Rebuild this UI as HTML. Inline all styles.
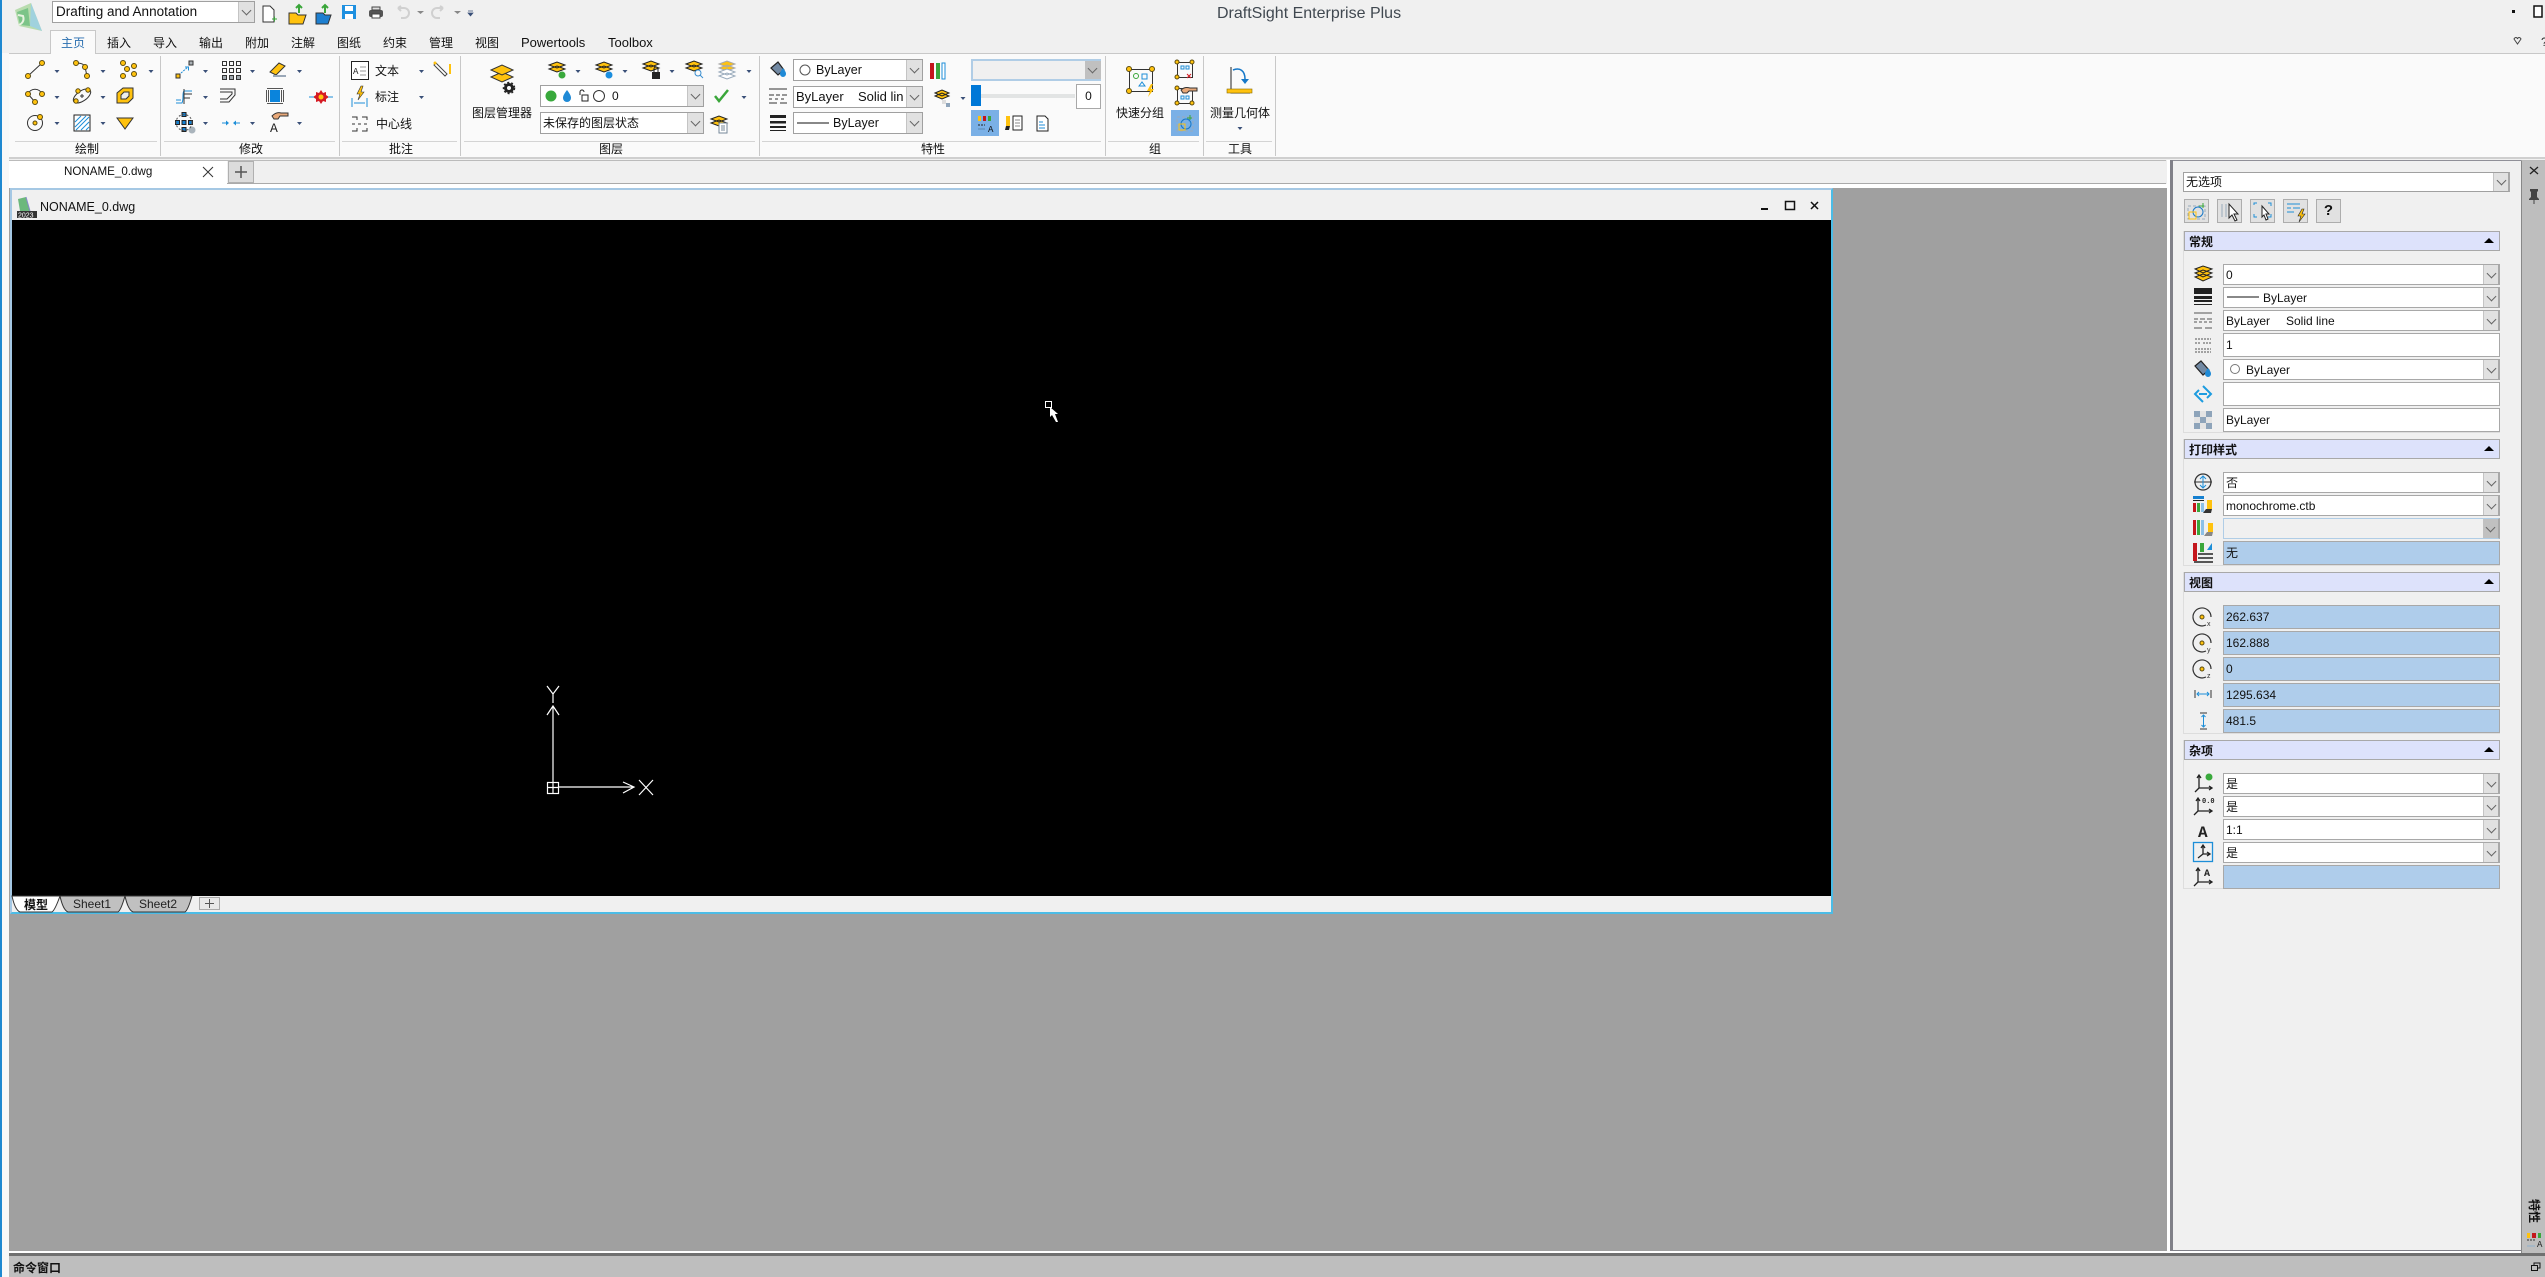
<!DOCTYPE html>
<html><head><meta charset="utf-8"><title>DraftSight</title>
<style>
html,body{margin:0;padding:0;width:2545px;height:1277px;overflow:hidden;background:#f0f0f0}
*{box-sizing:border-box}
body{font:12px/14px "Liberation Sans","Noto Sans CJK SC",sans-serif;color:#111;position:relative}
.a{position:absolute}
.t{position:absolute;white-space:nowrap;line-height:16px;height:16px}
.ctr{transform:translateX(-50%)}
.f{position:absolute;left:2223px;width:277px;height:24px;background:#fff;border:1px solid #a8a8a8;padding-left:2px;line-height:23px;font-size:12px;white-space:nowrap}
.f.h{background:#afcdeb}
.f.s{height:21px;line-height:20px;border-right:2px solid #a8a8a8}
.c{position:absolute;background:#fff;border:1px solid #a0a0a0;white-space:nowrap;overflow:hidden;line-height:20px;padding-left:2px}
.b{position:absolute;right:0;top:0;bottom:0;width:14px;background:#e1e1e1;border-left:1px solid #c4c4c4}
.b:after{content:"";position:absolute;left:4px;top:calc(50% - 5px);width:6px;height:6px;border-right:1px solid #666;border-bottom:1px solid #666;transform:rotate(45deg)}
.f .b{width:15px}
.sec{position:absolute;left:2184px;width:316px;height:20px;background:#dde2fb;border:1px solid #a8a8a8;font-weight:bold;line-height:20px;padding-left:4px;font-size:12px}
.sec:after{content:"";position:absolute;right:5px;top:6px;border:5px solid transparent;border-top:0;border-bottom:5px solid #000}
.box{position:absolute;left:2183px;width:317px;border-left:1px solid #ddd;border-bottom:1px solid #ddd;background:#f0f0f0}
.tb{position:absolute;top:199px;width:25px;height:24px;background:#e1e1e1;border:1px solid #adadad}
.sep{position:absolute;top:56px;width:1px;height:100px;background:#c8c8c8}
.ln{position:absolute;top:141px;height:1px;background:#d4d4d4}
svg{position:absolute;left:0;top:0;overflow:visible}
.d{fill:#ffc20e;stroke:#5a4a10;stroke-width:1}
.k{fill:none;stroke:#333;stroke-width:1}
.bl{fill:none;stroke:#1d8ed8;stroke-width:1}
.ar{fill:#3a5078}
.y{fill:#ffc20e;stroke:#222;stroke-width:1}
</style></head><body>

<!-- left edge -->
<div class="a" style="left:0;top:0;width:2px;height:1277px;background:#1e88d0"></div>
<div class="a" style="left:2px;top:53px;width:7px;height:1224px;background:#f8f8f8"></div>

<!-- quick access -->
<div class="c" style="left:52px;top:1px;width:203px;height:22px;font-size:13.5px;border-width:1px;padding-left:3px">Drafting and Annotation<span class="b" style="width:16px"></span></div>
<div class="t" style="left:1217px;top:6px;font-size:16px;color:#404850">DraftSight Enterprise Plus</div>

<!-- ribbon tabs -->
<div class="a" style="left:9px;top:53px;width:2536px;height:106px;background:#fafafa;border-top:1px solid #c8c8c8;border-bottom:2px solid #cfcfcf"></div>
<div class="a" style="left:50px;top:30px;width:46px;height:24px;background:#fafafa;border:1px solid #c8c8c8;border-bottom:0"></div>
<div class="t ctr" style="left:73px;top:35px;color:#2a6fb0">主页</div>
<div class="t ctr" style="left:119px;top:35px">插入</div>
<div class="t ctr" style="left:165px;top:35px">导入</div>
<div class="t ctr" style="left:211px;top:35px">输出</div>
<div class="t ctr" style="left:257px;top:35px">附加</div>
<div class="t ctr" style="left:303px;top:35px">注解</div>
<div class="t ctr" style="left:349px;top:35px">图纸</div>
<div class="t ctr" style="left:395px;top:35px">约束</div>
<div class="t ctr" style="left:441px;top:35px">管理</div>
<div class="t ctr" style="left:487px;top:35px">视图</div>
<div class="t" style="left:521px;top:35px;font-size:13px">Powertools</div>
<div class="t" style="left:608px;top:35px;font-size:13px">Toolbox</div>

<!-- separators -->
<div class="sep" style="left:160px"></div><div class="sep" style="left:339px"></div><div class="sep" style="left:460px"></div>
<div class="sep" style="left:759px"></div><div class="sep" style="left:1105px"></div><div class="sep" style="left:1203px"></div><div class="sep" style="left:1275px"></div>
<div class="ln" style="left:15px;width:142px"></div><div class="ln" style="left:164px;width:171px"></div><div class="ln" style="left:342px;width:115px"></div>
<div class="ln" style="left:464px;width:291px"></div><div class="ln" style="left:762px;width:339px"></div><div class="ln" style="left:1108px;width:91px"></div><div class="ln" style="left:1206px;width:66px"></div>
<div class="t ctr" style="left:87px;top:141px">绘制</div>
<div class="t ctr" style="left:251px;top:141px">修改</div>
<div class="t ctr" style="left:401px;top:141px">批注</div>
<div class="t ctr" style="left:611px;top:141px">图层</div>
<div class="t ctr" style="left:933px;top:141px">特性</div>
<div class="t ctr" style="left:1155px;top:141px">组</div>
<div class="t ctr" style="left:1240px;top:141px">工具</div>

<!-- annotation text -->
<div class="t" style="left:375px;top:63px">文本</div>
<div class="t" style="left:375px;top:89px">标注</div>
<div class="t" style="left:376px;top:116px">中心线</div>
<div class="t" style="left:472px;top:105px">图层管理器</div>

<!-- layer combos -->
<div class="c" style="left:540px;top:85px;width:164px;height:22px"><span class="a" style="left:71px;top:0">0</span><span class="b" style="width:16px"></span></div>
<div class="c" style="left:540px;top:112px;width:164px;height:22px">未保存的图层状态<span class="b" style="width:16px"></span></div>

<!-- property combos -->
<div class="c" style="left:793px;top:59px;width:130px;height:22px"><span class="a" style="left:22px;top:0;font-size:12.5px">ByLayer</span><span class="b" style="width:16px"></span></div>
<div class="c" style="left:793px;top:86px;width:130px;height:22px;font-size:13px">ByLayer<span class="a" style="left:64px;top:0">Solid lin</span><span class="b" style="width:16px"></span></div>
<div class="c" style="left:793px;top:112px;width:130px;height:22px"><span class="a" style="left:39px;top:0;font-size:12.5px">ByLayer</span><span class="b" style="width:16px"></span></div>
<div class="a" style="left:971px;top:59px;width:130px;height:22px;background:#f0f0f0;border:2px solid #b0cde6;border-right:0"><span class="b" style="width:16px;background:#c0c0c0;border:0"></span></div>
<div class="a" style="left:981px;top:94px;width:94px;height:4px;background:#e2e4e4"></div>
<div class="a" style="left:971px;top:85px;width:10px;height:21px;background:#0078d7"></div>
<div class="a" style="left:1076px;top:84px;width:25px;height:25px;background:#fff;border:1px solid #a8a8a8;text-align:center;line-height:23px">0</div>
<div class="a" style="left:971px;top:110px;width:28px;height:26px;background:#7ab0e6"></div>
<div class="a" style="left:1171px;top:110px;width:28px;height:26px;background:#7ab0e6"></div>
<div class="t" style="left:1116px;top:105px">快速分组</div>
<div class="t" style="left:1210px;top:105px">测量几何体</div>

<!-- document tab bar -->
<div class="a" style="left:9px;top:160px;width:2157px;height:24px;background:#f0f0f0;border-top:1px solid #bbb;border-bottom:1px solid #aaa"></div>
<div class="a" style="left:9px;top:161px;width:218px;height:23px;background:#fff"></div>
<div class="t" style="left:64px;top:164px;font-size:11.6px">NONAME_0.dwg</div>
<div class="a" style="left:228px;top:161px;width:26px;height:22px;background:#dcdcdc;border:1px solid #b0b0b0"></div>
<div class="a" style="left:9px;top:184px;width:2158px;height:4px;background:#fff"></div>

<!-- MDI bg -->
<div class="a" style="left:9px;top:188px;width:2158px;height:1063px;background:#a0a0a0"></div>
<div class="a" style="left:2167px;top:160px;width:3px;height:1093px;background:#fff"></div>
<div class="a" style="left:2170px;top:160px;width:3px;height:1091px;background:#808088"></div>

<!-- MDI window -->
<div class="a" style="left:10px;top:188px;width:1823px;height:726px;background:#f0f0f0;border:2px solid #4cbce6;border-top:2px solid #a5c8e4;border-left-color:#a5c8e4"></div>
<div class="a" style="left:12px;top:220px;width:1819px;height:676px;background:#000"></div>
<div class="t" style="left:40px;top:199px;font-size:12.5px">NONAME_0.dwg</div>

<!-- command bar -->
<div class="a" style="left:9px;top:1251px;width:2536px;height:2px;background:#fff"></div>
<div class="a" style="left:9px;top:1253px;width:2536px;height:3px;background:#707070"></div>
<div class="a" style="left:9px;top:1256px;width:2536px;height:21px;background:#bebebe"></div>
<div class="t" style="left:13px;top:1260px;font-weight:bold">命令窗口</div>

<!-- right panel -->
<div class="a" style="left:2173px;top:160px;width:348px;height:1091px;background:#f0f0f0;border-top:1px solid #909098;border-bottom:1px solid #808088"></div>
<div class="a" style="left:2521px;top:160px;width:24px;height:1093px;background:#bebebe;border-left:1px solid #888;border-top:1px solid #bbb"></div>
<div class="t" style="left:2522px;top:1203px;width:24px;height:16px;text-align:center;font-weight:bold;font-size:12px;transform:rotate(90deg)">特性</div>

<div class="c" style="left:2183px;top:172px;width:327px;height:20px;padding-left:2px;line-height:18px;border-right:2px solid #a8a8a8">无选项<span class="b" style="width:15px"></span></div>
<div class="tb" style="left:2184px"></div><div class="tb" style="left:2217px"></div><div class="tb" style="left:2250px"></div><div class="tb" style="left:2283px"></div>
<div class="tb" style="left:2316px;text-align:center;font-weight:bold;font-size:15px;line-height:22px">?</div>

<div class="box" style="top:231px;height:202px"></div>
<div class="box" style="top:439px;height:127px"></div>
<div class="box" style="top:572px;height:162px"></div>
<div class="box" style="top:740px;height:149px"></div>

<div class="sec" style="top:231px">常规</div>
<div class="f s" style="top:264px">0<span class="b"></span></div>
<div class="f s" style="top:287px"><span class="a" style="left:39px;top:0">ByLayer</span><span class="b"></span></div>
<div class="f s" style="top:310px">ByLayer <span class="a" style="left:62px;top:0">Solid line</span><span class="b"></span></div>
<div class="f" style="top:333px">1</div>
<div class="f s" style="top:359px"><span class="a" style="left:22px;top:0">ByLayer</span><span class="b"></span></div>
<div class="f" style="top:382px"></div>
<div class="f" style="top:408px">ByLayer</div>

<div class="sec" style="top:439px">打印样式</div>
<div class="f s" style="top:472px">否<span class="b"></span></div>
<div class="f s" style="top:495px">monochrome.ctb<span class="b"></span></div>
<div class="f s" style="top:518px;background:#f0f0f0;border-color:#b0cde6 #a8a8a8 #b0cde6 #b0cde6"><span class="b" style="background:#c0c0c0;border:0"></span></div>
<div class="f h" style="top:541px">无</div>

<div class="sec" style="top:572px">视图</div>
<div class="f h" style="top:605px">262.637</div>
<div class="f h" style="top:631px">162.888</div>
<div class="f h" style="top:657px">0</div>
<div class="f h" style="top:683px">1295.634</div>
<div class="f h" style="top:709px">481.5</div>

<div class="sec" style="top:740px">杂项</div>
<div class="f s" style="top:773px">是<span class="b"></span></div>
<div class="f s" style="top:796px">是<span class="b"></span></div>
<div class="f s" style="top:819px">1:1<span class="b"></span></div>
<div class="f s" style="top:842px">是<span class="b"></span></div>
<div class="f h" style="top:865px"></div>

<!-- Icon layer -->
<svg width="2545" height="1277" viewBox="0 0 2545 1277" xmlns="http://www.w3.org/2000/svg">
<!-- logo -->
<path d="M15 10 L31 3 L42 31 L19 26Z" fill="#b8dcae"/><path d="M17 12 L28 8 L30 26 L20 25Z" fill="#7cc488"/><path d="M31 3 L42 31 L30 26Z" fill="#a0d2de"/>
<path d="M19 25 Q25 22 23 16 L18 15" fill="none" stroke="#e8f3e0" stroke-width="2"/>
<!-- quick access -->
<path d="M263 6h7l4 4v12h-11z" fill="#fff" stroke="#333"/><path d="M272 19h5M274.500 16.500v5" stroke="#3aa63a"/>
<path d="M289 13h7l2 2h8l-3 9h-14z" fill="#ffc20e" stroke="#333"/><path d="M299 13V5M296 8l3-3 3 3" stroke="#3aa63a" stroke-width="2" fill="none"/>
<path d="M316 13h7l2 2h6l-3 9h-12z" fill="#1e7fd0" stroke="#333"/><path d="M325 13V5M322 8l3-3 3 3" stroke="#3aa63a" stroke-width="2" fill="none"/>
<path d="M342 5h14v14h-14z" fill="#1e90e0"/><rect x="345" y="6" width="8" height="5" fill="#fff"/><rect x="345" y="14" width="8" height="5" fill="#fff"/>
<rect x="369" y="10" width="14" height="7" rx="2" fill="#555"/><rect x="372" y="7" width="8" height="3" fill="#ddd" stroke="#444"/><rect x="372" y="14" width="8" height="4" fill="#fff" stroke="#444"/>
<path d="M398 8h6a5 5 0 0 1 0 10h-3M398 8l3-2M398 8l3 3" fill="none" stroke="#d0d0d0" stroke-width="2"/><path d="M417 11h7l-3.500 3z" fill="#888"/>
<path d="M443 8h-6a5 5 0 0 0 0 10h3M443 8l-3-2M443 8l-3 3" fill="none" stroke="#d0d0d0" stroke-width="2"/><path d="M454 11h7l-3.500 3z" fill="#888"/>
<path d="M468 11h5M468 13h5l-2.500 3z" fill="#3a5078" stroke="#3a5078" stroke-width=".7"/>
<!-- window controls top -->
<rect x="2512" y="10" width="3" height="3" fill="#111"/><rect x="2534" y="6" width="8" height="11" fill="#fff" stroke="#111" stroke-width="1.500"/>
<path d="M2514 39c1-2 3-2 3.500 0 .5-2 2.500-2 3.500 0l-3.500 5z" fill="none" stroke="#444"/>
<text x="2541" y="46" font-size="12" fill="#333" font-family="Liberation Sans">?</text>

<!-- draw group -->
<path class="k" d="M28 76L42 63"/><circle class="d" cx="28" cy="76" r="2.500"/><circle class="d" cx="42" cy="63" r="2.500"/>
<path class="k" d="M76 63Q84 63 85 67L87 76"/><circle class="d" cx="76" cy="63" r="2.500"/><circle class="d" cx="85" cy="67" r="2.500"/><circle class="d" cx="87" cy="76" r="2.500"/>
<circle class="d" cx="123" cy="63" r="2.500"/><circle class="d" cx="134" cy="66" r="2.500"/><circle class="d" cx="127" cy="69" r="2.500"/><circle class="d" cx="123" cy="76" r="2.500"/><circle class="d" cx="134" cy="74" r="2.500"/>
<path class="k" d="M28 94A7.500 7.500 0 0 1 42 94M28 94L35 102"/><circle class="d" cx="28" cy="94" r="2.500"/><circle class="d" cx="42" cy="94" r="2.500"/><circle class="d" cx="35" cy="102" r="2.500"/>
<ellipse class="k" cx="82" cy="96" rx="10" ry="5" transform="rotate(-35 82 96)"/><path class="k" d="M80 96h4M82 94v4"/><circle class="d" cx="76" cy="101" r="2.200"/><circle class="d" cx="88" cy="90" r="2.200"/><circle class="d" cx="78" cy="91" r="2.200"/>
<path d="M123 88h10v10l-5 5h-11v-10z" fill="#ffc20e" stroke="#333"/><path d="M124 92h5v4l-3 3h-5v-4z" fill="#eee" stroke="#333"/>
<circle class="k" cx="35" cy="123" r="7.500" stroke-width="1.200"/><circle class="d" cx="35" cy="123" r="2"/><circle class="d" cx="40" cy="117" r="2.500"/>
<rect x="74" y="115" width="16" height="16" fill="#fff" stroke="#222"/><path class="bl" d="M75 122l6-6M75 127l11-11M76 130l13-13M81 130l8-8M86 130l3-3"/>
<path d="M117 118h16l-8 11z" fill="#ffc20e" stroke="#333"/>
<g class="ar"><path d="M54.500 70h5l-2.500 3zM100.500 70h5l-2.500 3zM148.500 70h5l-2.500 3zM54.500 96h5l-2.500 3zM100.500 96h5l-2.500 3zM54.500 122h5l-2.500 3zM100.500 122h5l-2.500 3z"/>
<path d="M203 70h5l-2.500 3zM250 70h5l-2.500 3zM297 70h5l-2.500 3zM203 96h5l-2.500 3zM203 122h5l-2.500 3zM250 122h5l-2.500 3zM297 122h5l-2.500 3z"/>
<path d="M419 70h5l-2.500 3zM419 96h5l-2.500 3zM575.500 70h5l-2.500 3zM622.500 70h5l-2.500 3zM669.500 70h5l-2.500 3zM746.500 70h5l-2.500 3zM741.500 96h5l-2.500 3zM960.500 97h5l-2.500 3zM1237.500 127h5l-2.500 3z"/></g>

<!-- modify group -->
<rect x="176" y="74" width="4" height="4" fill="#ffc20e" stroke="#333"/><rect x="189" y="61" width="4" height="4" fill="#aab0b5" stroke="#333"/><path class="bl" stroke-dasharray="2 1" d="M181 73l7-6"/><path d="M185 67h3.500v3.500" class="bl"/>
<g fill="none" stroke="#333"><rect x="222.500" y="61.500" width="4" height="4"/><rect x="229.500" y="61.500" width="4" height="4"/><rect x="236.500" y="61.500" width="4" height="4"/><rect x="222.500" y="68.500" width="4" height="4"/><rect x="229.500" y="68.500" width="4" height="4"/><rect x="236.500" y="68.500" width="4" height="4"/></g>
<g fill="#a0a8ae" stroke="#333"><rect x="222.500" y="75.500" width="4" height="4"/><rect x="229.500" y="75.500" width="4" height="4"/><rect x="236.500" y="75.500" width="4" height="4"/></g>
<path d="M270 72l9-9 6 3-9 9z" fill="#ffc20e" stroke="#333"/><rect x="273" y="75" width="13" height="2" fill="#9aa8b8"/>
<path class="bl" d="M176 103h6c2-5 0-10 2-12h8M176 100h5"/><path d="M184 89v15M184 94h8M184 98h6" class="k"/>
<path class="k" d="M220 89h15v6l-6 7h-9M220 92h12v2l-5 5h-7"/>
<rect x="270" y="90" width="10" height="12" fill="#0a84dc"/><path fill="none" stroke="#555" d="M267 88.500h16M267 103.500h16M266.500 90v12M268.500 90v12M283.500 90v12M281.500 90v12"/>
<path d="M321 90l2 3 3-1 0 3 3 2-3 2 0 3-3-1-2 3-2-3-3 1 0-3-3-2 3-2 0-3 3 1z" fill="#d51b24"/><circle cx="321" cy="97" r="2.500" fill="#ffc20e"/><path d="M309 97h5M328 97h5" class="bl"/>
<g fill="#1580d0" stroke="#222"><rect x="182" y="112.500" width="4" height="4"/><rect x="175.500" y="120.500" width="4" height="4"/><rect x="182" y="120.500" width="4" height="4"/><rect x="188.500" y="120.500" width="4" height="4"/><rect x="182" y="127.500" width="4" height="4"/></g><circle cx="192" cy="130" r="3.500" fill="#aab4bc"/><circle cx="184" cy="122.500" r="8" fill="none" stroke="#555" stroke-dasharray="2 2"/>
<path class="bl" d="M222 123h6M234 123h6"/><path d="M229 123l-3-2.500v5zM233 123l3-2.500v5z" fill="#1d8ed8"/>
<path d="M272 116c3-3 6-4 9-3l7 0v3h-8l-2 3h-4z" fill="#e8a878" stroke="#333"/><text x="270" y="132" font-size="13" font-family="Liberation Mono" fill="#222">A</text>

<!-- annot -->
<rect x="351.500" y="61.500" width="17" height="18" fill="#fff" stroke="#222"/><text x="353" y="74" font-size="9" font-family="Liberation Mono" fill="#222">A</text><path d="M360 67h6M360 71h6M360 75h6" stroke="#999"/>
<path d="M436 63l11 11-2 2-11-11z" fill="#fff" stroke="#444"/><path d="M450 64v10" stroke="#ffc20e" stroke-width="2"/><circle cx="435" cy="63" r="1.500" fill="#ffc20e"/>
<path d="M361 86l-4 8h3l-2 6 6-8h-3l2-6z" fill="#ffc20e" stroke="#333" stroke-width=".6"/><path class="bl" d="M352 98v9M367 98v9M354 103h11"/>
<path class="k" d="M352 117h5v3M362 117h5v3M352 124h3M358 124h3M364 124h3M352 131h5v-3M362 131h5v-3"/>

<!-- layer big -->
<path d="M491 77l11-5 11 5-11 5z" fill="#ffc20e" stroke="#333"/><path d="M491 70l11-5 11 5-11 5z" fill="#ffc20e" stroke="#333"/>
<circle cx="509" cy="88" r="3.500" fill="none" stroke="#222" stroke-width="3"/><circle cx="509" cy="88" r="5.500" fill="none" stroke="#222" stroke-width="1.500" stroke-dasharray="2 2"/>
<!-- layer small -->
<g fill="#ffc20e" stroke="#222" stroke-width="1"><path d="M549 69l8-3 8 3-8 3zM549 65l8-3 8 3-8 3z"/><path d="M596 69l8-3 8 3-8 3zM596 65l8-3 8 3-8 3z"/><path d="M643 68l8-3 8 3-8 3zM643 64l8-3 8 3-8 3z"/><path d="M686 68l8-3 8 3-8 3zM686 64l8-3 8 3-8 3z"/></g>
<circle cx="562" cy="75" r="3.500" fill="#39a93c"/><circle cx="609" cy="75" r="3.500" fill="#1b8ede"/>
<rect x="652" y="72" width="8" height="7" fill="#222"/><path d="M654 72v-3a2 2 0 0 1 4 0v3" fill="none" stroke="#222"/>
<circle cx="698" cy="73" r="3" fill="none" stroke="#3a8ecf"/><path d="M700 75l3 3" stroke="#3a8ecf"/>
<path d="M719 68l8-3 8 3-8 3zM719 64l8-3 8 3-8 3z" fill="#ffc20e" stroke="#aaa"/><path d="M719 72l8-3 8 3-8 3zM719 76l8-3 8 3-8 3z" fill="#fff" stroke="#9ab"/>
<!-- layer combo icons -->
<circle cx="551" cy="96" r="5.500" fill="#39a93c"/><path d="M567 90c3 4 4 6 4 8a4 4 0 0 1-8 0c0-2 1-4 4-8z" fill="#1f8ad6"/>
<rect x="582" y="95" width="6" height="6" fill="#fff" stroke="#222"/><path d="M580 95v-3a2 2 0 0 1 4 0" fill="none" stroke="#222"/>
<circle cx="599" cy="96" r="5.500" fill="#fff" stroke="#333"/>
<path d="M715 96l4 5 9-11" fill="none" stroke="#3aa63a" stroke-width="2.500"/>
<path d="M711 119l8-3 8 3-8 3zM711 123l8-3 8 3-8 3z" fill="#ffc20e" stroke="#222"/><rect x="719" y="123" width="8" height="10" fill="#fff" stroke="#789"/><path d="M721 126h4M721 128h4M721 130h4" stroke="#789"/>
<!-- properties icons -->
<path d="M771 68l7-6 6 8-6 5z" fill="#7289a3" stroke="#222" stroke-width="1.200"/><path d="M783 68c2 3 3 4 3 6a3 3 0 0 1-6 0c0-2 1-3 3-6z" fill="#1f8ad6"/>
<path d="M769 89h18M769 95h5M776 95h4M782 95h5M769 99h3M775 99h3M781 99h3M769 103h8M780 103h7" stroke="#333"/>
<path fill="#222" d="M770 115h16v3h-16zM770 121h16v2.500h-16zM770 126h16v2h-16zM770 130h16v1h-16z"/>
<circle cx="805" cy="70" r="5" fill="#fff" stroke="#555"/>
<path d="M797 123h32" stroke="#111"/>
<rect x="930" y="63" width="4" height="16" fill="#c4161c"/><rect x="936" y="63" width="4" height="16" fill="#3aa63a"/><path d="M942 63h3v16h-3z" fill="#fff" stroke="#1d8ed8"/>
<path d="M935 96l7-3 7 3-7 3zM935 93l7-3 7 3-7 3z" fill="#ffc20e" stroke="#222"/><rect x="942" y="100" width="4" height="4" fill="#ddd"/><rect x="946" y="103" width="4" height="4" fill="#8ea4ba"/>
<rect x="978" y="116" width="3" height="5" fill="#ffc20e"/><rect x="983" y="116" width="3" height="5" fill="#c4161c"/><rect x="988" y="116" width="3" height="5" fill="#3aa63a"/><path d="M978 125h7" stroke="#222" stroke-dasharray="2 1"/><path d="M978 129h7" stroke="#5c87b0"/><text x="988" y="132" font-size="9" font-family="Liberation Mono" fill="#111">A</text>
<rect x="1006" y="116" width="4" height="10" fill="#ffc20e"/><path d="M1006 126h4l-1 4h-4z" fill="#222"/><rect x="1013" y="116" width="9" height="14" fill="#fff" stroke="#222"/><path d="M1015 120h5M1015 123h5M1015 126h5" stroke="#888"/>
<path d="M1037 116h8l3 3v12h-11z" fill="#fff" stroke="#222"/><path d="M1039 122h4M1039 125h6M1039 128h6" stroke="#1d8ed8"/>
<!-- group icons -->
<rect x="1129.500" y="69.500" width="23" height="22" fill="none" stroke="#333"/><circle class="d" cx="1129" cy="69" r="2.500"/><circle class="d" cx="1152" cy="69" r="2.500"/><circle class="d" cx="1129" cy="91" r="2.500"/>
<circle cx="1136" cy="76" r="2.500" fill="none" stroke="#3aa63a"/><rect x="1142" y="74" width="5" height="5" fill="none" stroke="#1d8ed8"/><path d="M1139 86l3-4 3 4z" fill="none" stroke="#1d8ed8"/><path d="M1151 84l-4 7h3l-2 6 6-8h-3l2-5z" fill="#ffc20e"/>
<rect x="1177.500" y="62.500" width="15" height="15" fill="none" stroke="#333"/><circle class="d" cx="1177" cy="62" r="2"/><circle class="d" cx="1192" cy="62" r="2"/><circle class="d" cx="1177" cy="77" r="2"/><path d="M1187 74l4 4m0-4l-4 4" stroke="#d51b24"/><path d="M1181 66h3v3h-3zM1186 66h3v3h-3z" class="bl"/>
<rect x="1177.500" y="88.500" width="15" height="15" fill="none" stroke="#333"/><circle class="d" cx="1177" cy="88" r="2"/><circle class="d" cx="1192" cy="103" r="2"/><circle class="d" cx="1177" cy="103" r="2"/><path d="M1181 90c3-3 6-3 9-2l7 0v3h-8l-2 2h-4z" fill="#e8a878" stroke="#333"/><path d="M1181 96h3v3h-3zM1186 96h3v3h-3z" class="bl"/>
<path d="M1177 117h16v14h-16z" fill="none" stroke="#9ab" stroke-dasharray="3 2"/><circle cx="1186" cy="124" r="5" fill="none" stroke="#1678c8"/><rect x="1179" y="124" width="6" height="6" fill="none" stroke="#ffc20e"/><path d="M1187 118h5M1190 115v5" stroke="#3aa63a"/>
<!-- tools -->
<path d="M1231 67v26h19" fill="none" stroke="#222"/><path d="M1233 70c7-3 12 1 12 9" fill="none" stroke="#1678c8" stroke-width="1.500"/><path d="M1241 79h8l-4 5z" fill="#1678c8"/>
<rect x="1227" y="89" width="25" height="4" fill="#ffc20e" stroke="#8a6d00" stroke-width=".6"/>
<!-- doc tab icons -->
<path d="M203 167l10 10m0-10l-10 10" stroke="#333"/><path d="M235 172h12M241 166v12" stroke="#555" stroke-width="1.500"/>
<!-- window icon/controls -->
<path d="M18 199l8-2 4 14h-10z" fill="#6cb87c"/><path d="M26 197l4 14" stroke="#88c"/><rect x="17" y="211" width="20" height="7" fill="#333"/><text x="18" y="217.500" font-size="7" font-family="Liberation Sans" fill="#fff">2023</text>
<rect x="1761" y="208" width="7" height="2" fill="#111"/><rect x="1785.500" y="201.500" width="9" height="8" fill="none" stroke="#111" stroke-width="1.500"/><path d="M1811 202l7 7m0-7l-7 7" stroke="#111" stroke-width="1.500"/>
<!-- UCS -->
<g stroke="#fff" fill="none" stroke-width="1.200"><path d="M547 686l6 8 6-8M553 694v9M547 715l6-9 6 9M553 706v76M559 787h75M623 782l11 5-11 6M639 780l14 15M653 780l-14 15"/><rect x="547.500" y="782.500" width="11" height="11"/><path d="M553 782v11M547 787.500h12"/></g>
<!-- cursor -->
<rect x="1045.500" y="401.500" width="6" height="6" fill="none" stroke="#fff"/>
<path d="M1050 407l8 7h-3l3 8h-2l-4-7-2 2z" fill="#fff"/>
<!-- sheet tabs -->
<path d="M12 896q3 14 8 16h32q3-2 8-16z" fill="#fff" stroke="#333"/>
<path d="M60 896q3 14 8 16h50q3-2 7-16z" fill="#c0c0c0" stroke="#333"/>
<path d="M125 896q3 14 8 16h52q3-2 7-16z" fill="#c0c0c0" stroke="#333"/>
<text x="36" y="909" font-size="12" font-weight="bold" text-anchor="middle" font-family="Liberation Sans,Noto Sans CJK SC,sans-serif" fill="#111">模型</text>
<text x="92" y="908" font-size="12" text-anchor="middle" font-family="Liberation Sans" fill="#222">Sheet1</text>
<text x="158" y="908" font-size="12" text-anchor="middle" font-family="Liberation Sans" fill="#222">Sheet2</text>
<rect x="199.500" y="897.500" width="20" height="12" fill="#e8e8e8" stroke="#aaa"/><path d="M205 903.500h9M209.500 899v9" stroke="#555"/>
<!-- panel toolbar -->
<path d="M2188 206h17v13h-17z" fill="none" stroke="#9ab" stroke-dasharray="3 2"/><circle cx="2198" cy="212" r="5" fill="none" stroke="#1678c8"/><rect x="2189" y="212" width="7" height="7" fill="none" stroke="#ffc20e"/><path d="M2199 206h5M2203 203v5" stroke="#3aa63a"/>
<path d="M2222 204v13M2226 204v13" stroke="#9ab"/><path d="M2229 204v14l3-3 3 6 2-1-3-6h4z" fill="#fff" stroke="#222"/>
<path d="M2254 205v-2h3M2268 203h3v3M2271 214v3h-3M2257 217h-3v-3" class="bl" stroke-width="1.500"/><path d="M2262 206v11l2-2 2 5 2-1-2-5h3z" fill="#fff" stroke="#222"/>
<path d="M2287 204h13M2287 208h4M2293 208h7M2287 212h7" class="bl"/><path d="M2302 209l-4 7h3l-2 6 6-8h-3l2-5z" fill="#ffc20e" stroke="#222" stroke-width=".6"/>
<!-- panel side icons -->
<path d="M2530 167l8 7m0-7l-8 7" stroke="#222" stroke-width="1.300"/>
<path d="M2530 189h8v2l-1 1v5l2 2v1h-10v-1l2-2v-5l-1-1z" fill="#444"/><path d="M2534 200v4" stroke="#444"/>
<rect x="2527" y="1233" width="3" height="5" fill="#ffc20e"/><rect x="2532" y="1233" width="4" height="5" fill="#c4161c"/><rect x="2538" y="1233" width="3" height="5" fill="#3aa63a"/><path d="M2527 1240h8" stroke="#333" stroke-dasharray="2 1"/><path d="M2527 1246h8" stroke="#8fb0cc"/><text x="2537" y="1247" font-size="9" font-family="Liberation Mono" fill="#222">A</text>
<rect x="2531.500" y="1265.500" width="6" height="5" fill="none" stroke="#111"/><path d="M2534 1265v-2h6v5h-2" fill="none" stroke="#111"/>
<circle cx="2235" cy="369" r="4.500" fill="#fff" stroke="#777"/>
<path d="M2227 297h32" stroke="#111"/>
<!-- panel rows icons -->
<path d="M2195 277l8-3 9 3-9 4zM2195 273l8-3 9 3-9 4zM2195 269l8-3 9 3-9 4z" fill="#ffc20e" stroke="#222"/>
<path fill="#222" d="M2194 288h18v6h-18zM2194 296h18v3h-18zM2194 300h18v2h-18zM2194 304h18v1h-18z"/>
<path d="M2194 313h18M2194 319h4M2200 319h5M2207 319h5M2194 322h3M2199 322h3M2204 322h3M2209 322h3M2194 328h8M2205 328h7" stroke="#555"/>
<path d="M2195 339h16M2195 343h5M2203 343h8M2195 349h16M2195 352h16" stroke="#555" stroke-dasharray="2 1"/>
<path d="M2195 366l6-5 8 9-6 5z" fill="#7289a3" stroke="#222" stroke-width="1.200"/><path d="M2208 368c2 3 3 4 3 6a3 3 0 0 1-6 0c0-2 1-3 3-6z" fill="#1f8ad6"/>
<path d="M2203 386l8 8-4 4M2203 402l-8-8 4-4M2199 394l4 0 4 0" fill="none" stroke="#1d9ce0" stroke-width="2"/>
<path fill="#8ea4ba" d="M2194 411h6v6h-6zM2206 411h6v6h-6zM2200 417h6v6h-6zM2194 423h6v6h-6zM2206 423h6v6h-6z"/><path fill="#e4e4e4" d="M2200 411h6v6h-6zM2194 417h6v6h-6zM2206 417h6v6h-6zM2200 423h6v6h-6z"/>
<!-- print icons -->
<circle cx="2203" cy="482" r="8" fill="none" stroke="#333" stroke-width="1.300"/><path d="M2194 482h18" stroke="#333"/><path class="bl" stroke-width="1.500" d="M2203 476v12M2200 479l3-3 3 3M2200 485l3 3 3-3"/>
<rect x="2193" y="496" width="11" height="3" fill="#1580d0"/><rect x="2193" y="500" width="11" height="1" fill="#222"/><rect x="2193" y="503" width="3" height="9" fill="#c4161c"/><rect x="2197" y="503" width="3" height="9" fill="#3aa63a"/><rect x="2201" y="503" width="3" height="9" fill="#8cc0e8"/><rect x="2207" y="500" width="5" height="9" fill="#ffc20e"/><path d="M2206 509h6l-1 4h-8z" fill="#333"/>
<rect x="2193" y="520" width="3" height="15" fill="#c4161c"/><rect x="2197" y="520" width="3" height="15" fill="#3aa63a"/><rect x="2201" y="520" width="3" height="15" fill="#8cc0e8"/><rect x="2208" y="523" width="5" height="9" fill="#ffc20e"/><path d="M2207 532h6l-1 4h-8z" fill="#888"/>
<rect x="2193" y="543" width="4" height="18" fill="#c4161c"/><rect x="2200" y="543" width="4" height="9" fill="#3aa63a"/><path d="M2207 550l5-7v7z" fill="#1d8ed8"/><path d="M2198 554h15M2198 558h15M2194 562h19" stroke="#222" stroke-width="1.500"/>
<!-- view icons -->
<g fill="none" stroke="#333" stroke-width="1.200"><path d="M2206 625A9 9 0 1 1 2211 617"/><path d="M2206 651A9 9 0 1 1 2211 643"/><path d="M2206 677A9 9 0 1 1 2211 669"/></g>
<circle class="d" cx="2202" cy="617" r="2"/><circle class="d" cx="2202" cy="643" r="2"/><circle class="d" cx="2202" cy="669" r="2"/>
<text x="2207" y="626" font-size="7" font-family="Liberation Sans" fill="#333">x</text><text x="2207" y="652" font-size="7" font-family="Liberation Sans" fill="#333">y</text><text x="2207" y="678" font-size="7" font-family="Liberation Sans" fill="#333">z</text>
<path d="M2195 690v8M2211 690v8" stroke="#333"/><path class="bl" d="M2197 694h12M2199 692l-2 2 2 2M2207 692l2 2-2 2"/>
<path d="M2200 713h7M2200 729h7" stroke="#333"/><path class="bl" d="M2203.500 715v12M2201.500 717l2-2 2 2M2201.500 725l2 2 2-2"/>
<!-- misc icons -->
<g fill="none" stroke="#222" stroke-width="1.300">
<path d="M2199 776v12h12M2199 788l-4 4M2197 778l2-3 2 3M2209 786l3 2-3 2"/>
<path d="M2198 799v12h13M2198 811l-4 4M2196 801l2-3 2 3M2209 809l3 2-3 2"/>
<path d="M2203 846v8h6M2203 854l-5 4M2201 848l2-3 2 3M2207 852l3 2-3 2"/>
<path d="M2198 869v13h13M2198 882l-4 4M2196 871l2-3 2 3M2209 880l3 2-3 2"/></g>
<circle cx="2209" cy="777" r="3.500" fill="#39a93c"/>
<text x="2202" y="803" font-size="7" font-family="Liberation Mono" fill="#222" font-weight="bold">0.0</text>
<text x="2198" y="837" font-size="16" font-family="Liberation Mono" fill="#222" font-weight="bold">A</text>
<rect x="2193.500" y="842.500" width="19" height="19" fill="none" stroke="#1d8ed8" stroke-width="1.300"/>
<text x="2204" y="876" font-size="10" font-family="Liberation Mono" fill="#222" font-weight="bold">A</text>
</svg>
</body></html>
